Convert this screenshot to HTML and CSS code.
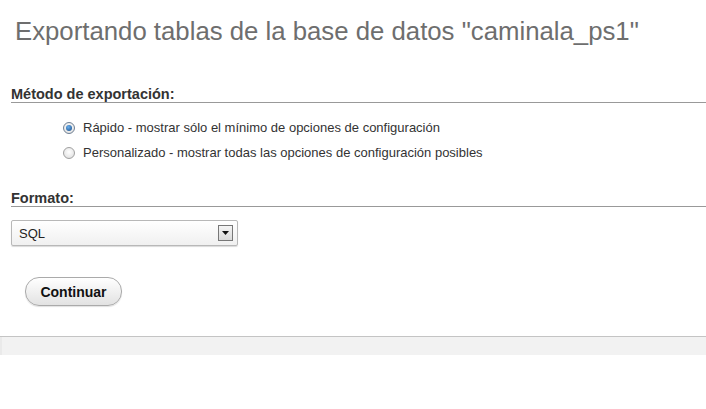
FILE: index.html
```html
<!DOCTYPE html>
<html lang="es">
<head>
<meta charset="utf-8">
<title>Exportar</title>
<link rel="stylesheet" href="styles.css">
</head>
<body>
<div class="page">
  <h2 class="title">Exportando tablas de la base de datos "caminala_ps1"</h2>
  <div class="section first">
    <h3 class="sec-head">Método de exportación:</h3>
    <ul class="options">
      <li class="opt"><span class="radio checked"></span><span>Rápido - mostrar sólo el mínimo de opciones de configuración</span></li>
      <li class="opt"><span class="radio"></span><span>Personalizado - mostrar todas las opciones de configuración posibles</span></li>
    </ul>
  </div>
  <div class="section second">
    <h3 class="sec-head">Formato:</h3>
    <div class="select"><span class="sel-text">SQL</span><span class="sel-arrow"><svg width="7" height="4" viewBox="0 0 7 4"><path d="M0 0h7L3.5 4z" fill="#111"/></svg></span></div>
  </div>
  <div class="actions"><button class="btn">Continuar</button></div>
</div>
<div class="footer"></div>
</body>
</html>
```
FILE: styles.css
```css
html, body { margin: 0; padding: 0; background: #fff; }
body { font-family: "Liberation Sans", Arial, sans-serif; color: #333; }
.page { padding: 0 0 0 11px; }
.title {
  margin: 0;
  padding: 14px 0 0 4px;
  font-size: 25.75px;
  font-weight: normal;
  color: #6e6e6e;
  line-height: 34px;
  height: 34px;
}
.sec-head {
  margin: 0;
  font-size: 14.5px;
  font-weight: bold;
  color: #333;
  border-bottom: 1px solid #999;
  line-height: 16px;
  padding-bottom: 0;
}
.first .sec-head { margin-top: 38px; }
.second .sec-head { margin-top: 25px; }
.options { list-style: none; margin: 0; padding: 12px 0 0 52px; }
.opt { display: flex; align-items: center; height: 25px; font-size: 13px; color: #333; }
.radio {
  width: 12px; height: 12px; border-radius: 50%;
  border: 1px solid #a0a0a0;
  background: radial-gradient(circle at 50% 40%, #fff 0%, #e6e6e6 70%, #cfcfcf 100%);
  margin-right: 8px; box-sizing: border-box; flex: none;
  display: flex; align-items: center; justify-content: center;
}
.radio.checked { border-color: #6f8094; }
.radio.checked::after {
  content: ""; width: 6px; height: 6px; border-radius: 50%;
  background: radial-gradient(circle at 40% 35%, #6ab0ee, #174a85);
}
.select {
  margin-top: 13px;
  width: 227px; height: 26px; box-sizing: border-box;
  border: 1px solid #b8b8b8; border-radius: 2px;
  background: linear-gradient(#fff, #f0f0f0);
  box-shadow: 0 1px 1px rgba(0,0,0,0.15);
  display: flex; align-items: center; justify-content: space-between;
  padding: 0 4px 0 7px;
  font-size: 13px; color: #222;
}
.sel-arrow {
  width: 15px; height: 16px; box-sizing: border-box;
  border: 1px solid #777; background: linear-gradient(#f4f4f4, #dadada);
  display: flex; align-items: center; justify-content: center;
}
.actions { display: flex; padding: 31px 0 0 14px; }
.btn {
  width: 97px; height: 29px; border-radius: 14px;
  border: 1px solid #aaa;
  background: linear-gradient(#ffffff, #e2e2e2);
  box-shadow: 0 1px 1px rgba(0,0,0,0.12);
  font-family: "Liberation Sans", Arial, sans-serif;
  font-size: 14px; font-weight: bold; color: #111; padding: 0;
}
.footer {
  margin-top: 30px;
  height: 18px;
  border-top: 1px solid #c4c4c4;
  background: #f2f2f2;
  box-shadow: inset 2px 0 0 #eaeaea;
}
```
